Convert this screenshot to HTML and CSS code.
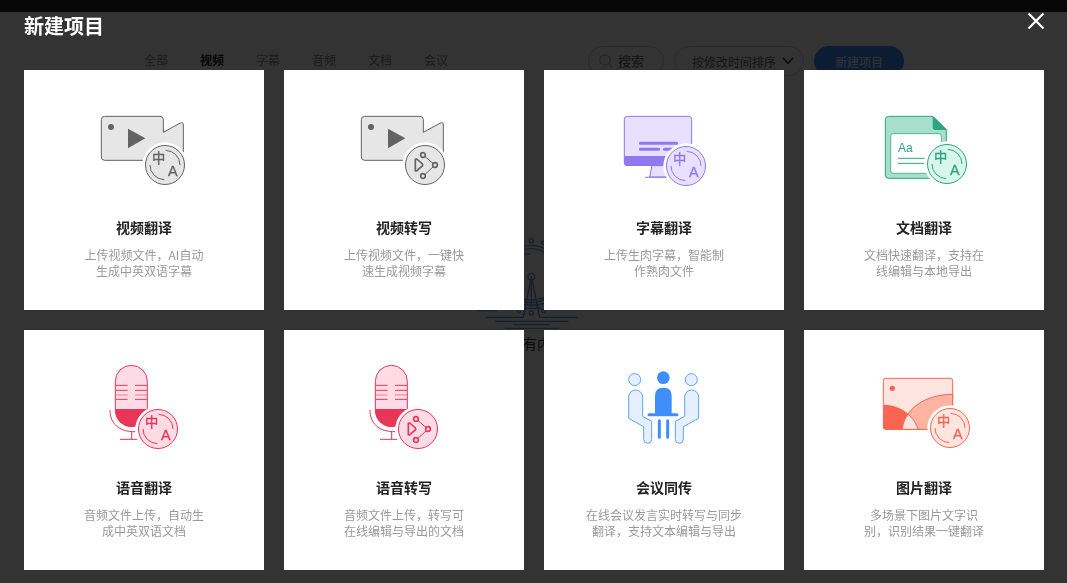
FILE: index.html
```html
<!DOCTYPE html>
<html lang="zh-CN">
<head>
    <meta charset="UTF-8">
    <meta name="viewport" content="width=device-width, initial-scale=1.0">
    <title>新建项目</title>
    <link rel="stylesheet" href="styles.css">
</head>
<body>

<!-- shared badge icons -->
<svg class="symbols" aria-hidden="true">
    <symbol id="badge-translate" viewBox="-70 -70 140 140">
        <circle r="68" fill="#fff"/>
        <circle class="tint" r="58.5"/>
        <path class="line" d="M2 -44A44 44 0 0 1 45 0M-45 0A44 44 0 0 0 -2 44"/>
        <text class="badge-zh" x="-19" y="-5">中</text>
        <text class="badge-en" x="23" y="33">A</text>
    </symbol>
    <symbol id="badge-transcribe" viewBox="-70 -70 140 140">
        <circle r="68" fill="#fff"/>
        <circle class="tint" r="58.5"/>
        <path class="line" d="M0 -25L25 -4M25 5L0 28"/>
        <path class="bold" d="M-29 -17V17Q-25 19 -21 14L-8 3Q-6 0 -8 -3L-21 -15Q-25 -19 -29 -17Z"/>
        <circle class="bold" cx="-6" cy="-30" r="7"/>
        <circle class="bold" cx="30" cy="0" r="7"/>
        <circle class="bold" cx="-6" cy="33" r="7"/>
    </symbol>
    <symbol id="camera" viewBox="0 -30 360 300">
        <path class="tint" d="M62 34H228Q238 34 238 44V82L289 54Q298 50 298 60V166H62Q52 166 52 156V44Q52 34 62 34Z"/>
        <path d="M200 163H302V180H200Z" fill="#fff"/>
        <circle class="solid" cx="81" cy="66" r="9"/>
        <path class="solid" d="M132 71L184 100L132 130Z"/>
    </symbol>
    <symbol id="mic" viewBox="0 0 360 300">
        <path class="tint" d="M94 79A48 48 0 0 1 190 79V166A48 48 0 0 1 94 166Z"/>
        <path class="solid" d="M94 162H190V168A48 48 0 0 1 94 168Z"/>
        <path class="line" d="M95 91H131M153 91H189M95 106H131M153 106H189M95 133H131M153 133H189"/>
        <path class="line faint" d="M95 120H131M153 120H189"/>
        <path class="line" d="M78 165C78 205 104 231 154 230M143 231V253M108 253H160"/>
    </symbol>
</svg>

<!-- page behind the dialog -->
<div class="page">
    <div class="topbar"></div>
    <div class="toolbar">
        <div class="tabs">
            <span>全部</span>
            <span class="active">视频</span>
            <span>字幕</span>
            <span>音频</span>
            <span>文档</span>
            <span>会议</span>
        </div>
        <div class="actions">
            <div class="pill search">
                <svg width="14" height="14" viewBox="0 0 14 14"><circle cx="6" cy="6" r="5.2"/><path d="M10 10L13 13"/></svg>
                <span>搜索</span>
            </div>
            <div class="pill sort">
                <span>按修改时间排序</span>
                <svg width="12" height="8" viewBox="0 0 12 8"><path d="M1 1L6 6.3L11 1"/></svg>
            </div>
            <div class="pill create">新建项目</div>
        </div>
    </div>
    <div class="empty">
        <svg width="140" height="110" viewBox="0 0 420 330">
            <circle cx="214" cy="62" r="6"/>
            <circle cx="250" cy="68" r="5"/>
            <circle cx="214" cy="162" r="86"/>
            <path d="M150 125A72 72 0 0 1 278 125M160 125Q180 101 214 101"/>
            <path d="M150 220Q214 260 278 220M140 235Q214 276 288 235M185 265H245"/>
            <circle cx="214" cy="170" r="10"/>
            <path d="M214 168V260M212 178L190 292H77M216 178L239 292H353"/>
            <circle cx="176" cy="273" r="5"/>
            <circle cx="214" cy="279" r="6"/>
            <circle cx="250" cy="273" r="5"/>
            <path d="M50 272H112M104 304H326M160 314H270M134 325H298"/>
        </svg>
        <p>没有内容</p>
    </div>
</div>

<!-- new project dialog -->
<div class="overlay">
    <div class="overlay-header">
        <h2>新建项目</h2>
        <svg class="close" width="18" height="18" viewBox="0 0 18 18"><path d="M1.5 1.5L16.5 16.5M16.5 1.5L1.5 16.5"/></svg>
    </div>
    <div class="cards">
        <div class="card">
            <svg class="icon gray" viewBox="0 -30 360 300">
                <use href="#camera" x="0" y="-30" width="360" height="300"/>
                <use href="#badge-translate" x="173" y="110" width="140" height="140"/>
            </svg>
            <h3>视频翻译</h3>
            <p>上传视频文件，AI自动<br>生成中英双语字幕</p>
        </div>
        <div class="card">
            <svg class="icon gray" viewBox="0 -30 360 300">
                <use href="#camera" x="0" y="-30" width="360" height="300"/>
                <use href="#badge-transcribe" x="173" y="110" width="140" height="140"/>
            </svg>
            <h3>视频转写</h3>
            <p>上传视频文件，一键快<br>速生成视频字幕</p>
        </div>
        <div class="card">
            <svg class="icon purple" viewBox="0 -30 360 300">
                <path class="tint" d="M144 182L137 216H195V182Z"/>
                <path class="line" d="M123 217H190"/>
                <rect class="tint" x="61" y="34" width="202" height="147" rx="9"/>
                <path class="solid" d="M60 153H264V173Q264 183 254 183H70Q60 183 60 173Z"/>
                <path class="bar" d="M109 115H218M109 133H164M181 133H210"/>
                <use href="#badge-translate" x="176" y="113" width="140" height="140"/>
            </svg>
            <h3>字幕翻译</h3>
            <p>上传生肉字幕，智能制<br>作熟肉文件</p>
        </div>
        <div class="card">
            <svg class="icon green" viewBox="0 -30 360 300">
                <path class="sheet" d="M74 34H207L247 74V220H74Q64 220 64 210V44Q64 34 74 34Z"/>
                <path class="solid" d="M206 33L249 75H214Q206 75 206 67Z"/>
                <rect class="paper" x="80" y="86" width="152" height="119" rx="7"/>
                <path class="line" d="M102 160H182M102 175H180"/>
                <text class="sample" x="102" y="141">Aa</text>
                <use href="#badge-translate" x="179" y="107" width="140" height="140"/>
            </svg>
            <h3>文档翻译</h3>
            <p>文档快速翻译，支持在<br>线编辑与本地导出</p>
        </div>
        <div class="card">
            <svg class="icon red" viewBox="0 0 360 300">
                <use href="#mic" x="0" y="0" width="360" height="300"/>
                <use href="#badge-translate" x="152" y="152" width="140" height="140"/>
            </svg>
            <h3>语音翻译</h3>
            <p>音频文件上传，自动生<br>成中英双语文档</p>
        </div>
        <div class="card">
            <svg class="icon red" viewBox="0 0 360 300">
                <use href="#mic" x="0" y="0" width="360" height="300"/>
                <use href="#badge-transcribe" x="152" y="152" width="140" height="140"/>
            </svg>
            <h3>语音转写</h3>
            <p>音频文件上传，转写可<br>在线编辑与导出的文档</p>
        </div>
        <div class="card">
            <svg class="icon blue" viewBox="0 0 360 300">
                <circle class="tint" cx="92" cy="74" r="18"/>
                <circle class="tint" cx="262" cy="74" r="18"/>
                <path class="tint" d="M74 126A21 21 0 0 1 116 126V184L143 199V253A12 12 0 0 1 119 253V215L74 190Z"/>
                <path class="tint" d="M284 126A21 21 0 0 0 242 126V184L214 199V253A12 12 0 0 0 238 253V215L284 190Z"/>
                <circle class="solid" cx="178" cy="68" r="19"/>
                <path class="solid" d="M153 178V122Q153 98 177 98H179Q203 98 203 122V178Z"/>
                <path class="bar" d="M135 179H219M166 197V247M191 197V247"/>
            </svg>
            <h3>会议同传</h3>
            <p>在线会议发言实时转写与同步<br>翻译，支持文本编辑与导出</p>
        </div>
        <div class="card">
            <svg class="icon orange" viewBox="0 0 360 300">
                <rect class="tint" x="58" y="70" width="208" height="153" rx="7"/>
                <path class="hill" d="M115 223C122 160 185 118 266 118V223Z"/>
                <path class="solid" d="M58 149C90 150 115 160 133 177Q117 196 115 224H65Q58 224 58 217Z"/>
                <path class="tint" d="M133 177Q155 197 163 223H115Q117 196 133 177Z"/>
                <circle class="solid" cx="85" cy="100" r="8"/>
                <use href="#badge-translate" x="188" y="149" width="140" height="140"/>
            </svg>
            <h3>图片翻译</h3>
            <p>多场景下图片文字识<br>别，识别结果一键翻译</p>
        </div>
    </div>
</div>

</body>
</html>
```

FILE: styles.css
```css
* {
    box-sizing: border-box;
}
body {
    margin: 0;
    height: 583px;
    overflow: hidden;
    font-family: "Noto Sans CJK SC", sans-serif;
    background: #fff;
}
h2, h3, p {
    margin: 0;
}
.symbols {
    display: none;
}

/* page behind */
.topbar {
    height: 12px;
    background: #202020;
}
.toolbar {
    display: flex;
    justify-content: space-between;
    padding: 34px 163px 0 144px;
}
.tabs {
    display: flex;
    gap: 32px;
    font-size: 12px;
    line-height: 27px;
    color: #888;
}
.tabs .active {
    font-weight: bold;
    color: #222;
}
.actions {
    display: flex;
    gap: 10px;
}
.pill {
    display: flex;
    align-items: center;
    height: 30px;
    border: 1px solid #d0d0d0;
    border-radius: 15px;
    font-size: 12px;
    color: #666;
}
.pill svg {
    fill: none;
    stroke: #333;
    stroke-width: 1.5;
}
.search {
    width: 76px;
    padding: 0 0 1px 10px;
    gap: 5px;
    font-size: 13px;
}
.search svg {
    stroke: #bbb;
    stroke-width: 1.2;
}
.sort {
    width: 130px;
    padding-left: 17px;
    gap: 6px;
}
.create {
    width: 90px;
    justify-content: center;
    border: none;
    background: #3d8bff;
    color: #fff;
}
.empty {
    display: flex;
    flex-direction: column;
    align-items: flex-start;
    margin-top: 144px;
    padding-left: 460px;
}
.empty svg {
    fill: none;
    stroke: #7896d0;
    stroke-width: 4;
}
.empty p {
    margin-left: 49px;
    font-size: 14px;
    line-height: 26px;
    color: #333;
}

/* dialog */
.overlay {
    position: fixed;
    inset: 0;
    padding: 0 22px 0 24px;
    background: rgba(0, 0, 0, 0.8);
}
.overlay-header {
    display: flex;
    justify-content: space-between;
    align-items: flex-start;
    height: 70px;
    padding-top: 12px;
}
.overlay-header h2 {
    font-size: 20px;
    line-height: 28px;
    color: #fff;
}
.close {
    fill: none;
    stroke: #fff;
    stroke-width: 2.2;
}
.cards {
    display: grid;
    grid-template-columns: repeat(4, 240px);
    grid-auto-rows: 240px;
    gap: 20px;
}
.card {
    display: flex;
    flex-direction: column;
    align-items: center;
    padding-top: 25px;
    background: #fff;
    text-align: center;
}
.card h3 {
    margin-top: 22px;
    font-size: 14px;
    line-height: 20px;
    color: #222;
}
.card p {
    margin-top: 10px;
    font-size: 12px;
    line-height: 16px;
    color: #999;
}

/* icons */
.icon {
    flex: none;
    width: 120px;
    height: 100px;
}
.tint {
    fill: var(--tint);
    stroke: currentColor;
    stroke-width: 3;
}
.solid {
    fill: currentColor;
}
.line, .bold, .bar {
    fill: none;
    stroke: currentColor;
    stroke-width: 3;
}
.bold {
    stroke-width: 5;
}
.bar {
    stroke-width: 9;
    stroke-linecap: round;
}
.faint {
    opacity: 0.6;
}
.badge-zh, .badge-en, .sample {
    fill: currentColor;
    text-anchor: middle;
    font-size: 40px;
}
.badge-zh {
    stroke: currentColor;
    stroke-width: 1;
}
.badge-en {
    font-family: "Liberation Sans", sans-serif;
    font-size: 43px;
    stroke: currentColor;
    stroke-width: 1;
}
.sample {
    text-anchor: start;
    font-family: "Liberation Sans", sans-serif;
    font-size: 36px;
}
.sheet {
    fill: #a7dfcc;
    stroke: currentColor;
    stroke-width: 3;
}
.paper {
    fill: #fff;
    stroke: #4fb894;
    stroke-width: 3;
}
.hill {
    fill: #ffb3a1;
    stroke: currentColor;
    stroke-width: 3;
}
.gray {
    color: #636363;
    --tint: #e6e6e6;
}
.purple {
    color: #9078f0;
    --tint: #e8e0ff;
}
.green {
    color: #2ba57e;
    --tint: #d8f6ec;
}
.red {
    color: #e83558;
    --tint: #ffdbe6;
}
.blue {
    color: #3e8ffc;
    --tint: #e4f0ff;
}
.blue .tint {
    stroke: #62a3f5;
}
.orange {
    color: #f96550;
    --tint: #ffe5df;
}
```
